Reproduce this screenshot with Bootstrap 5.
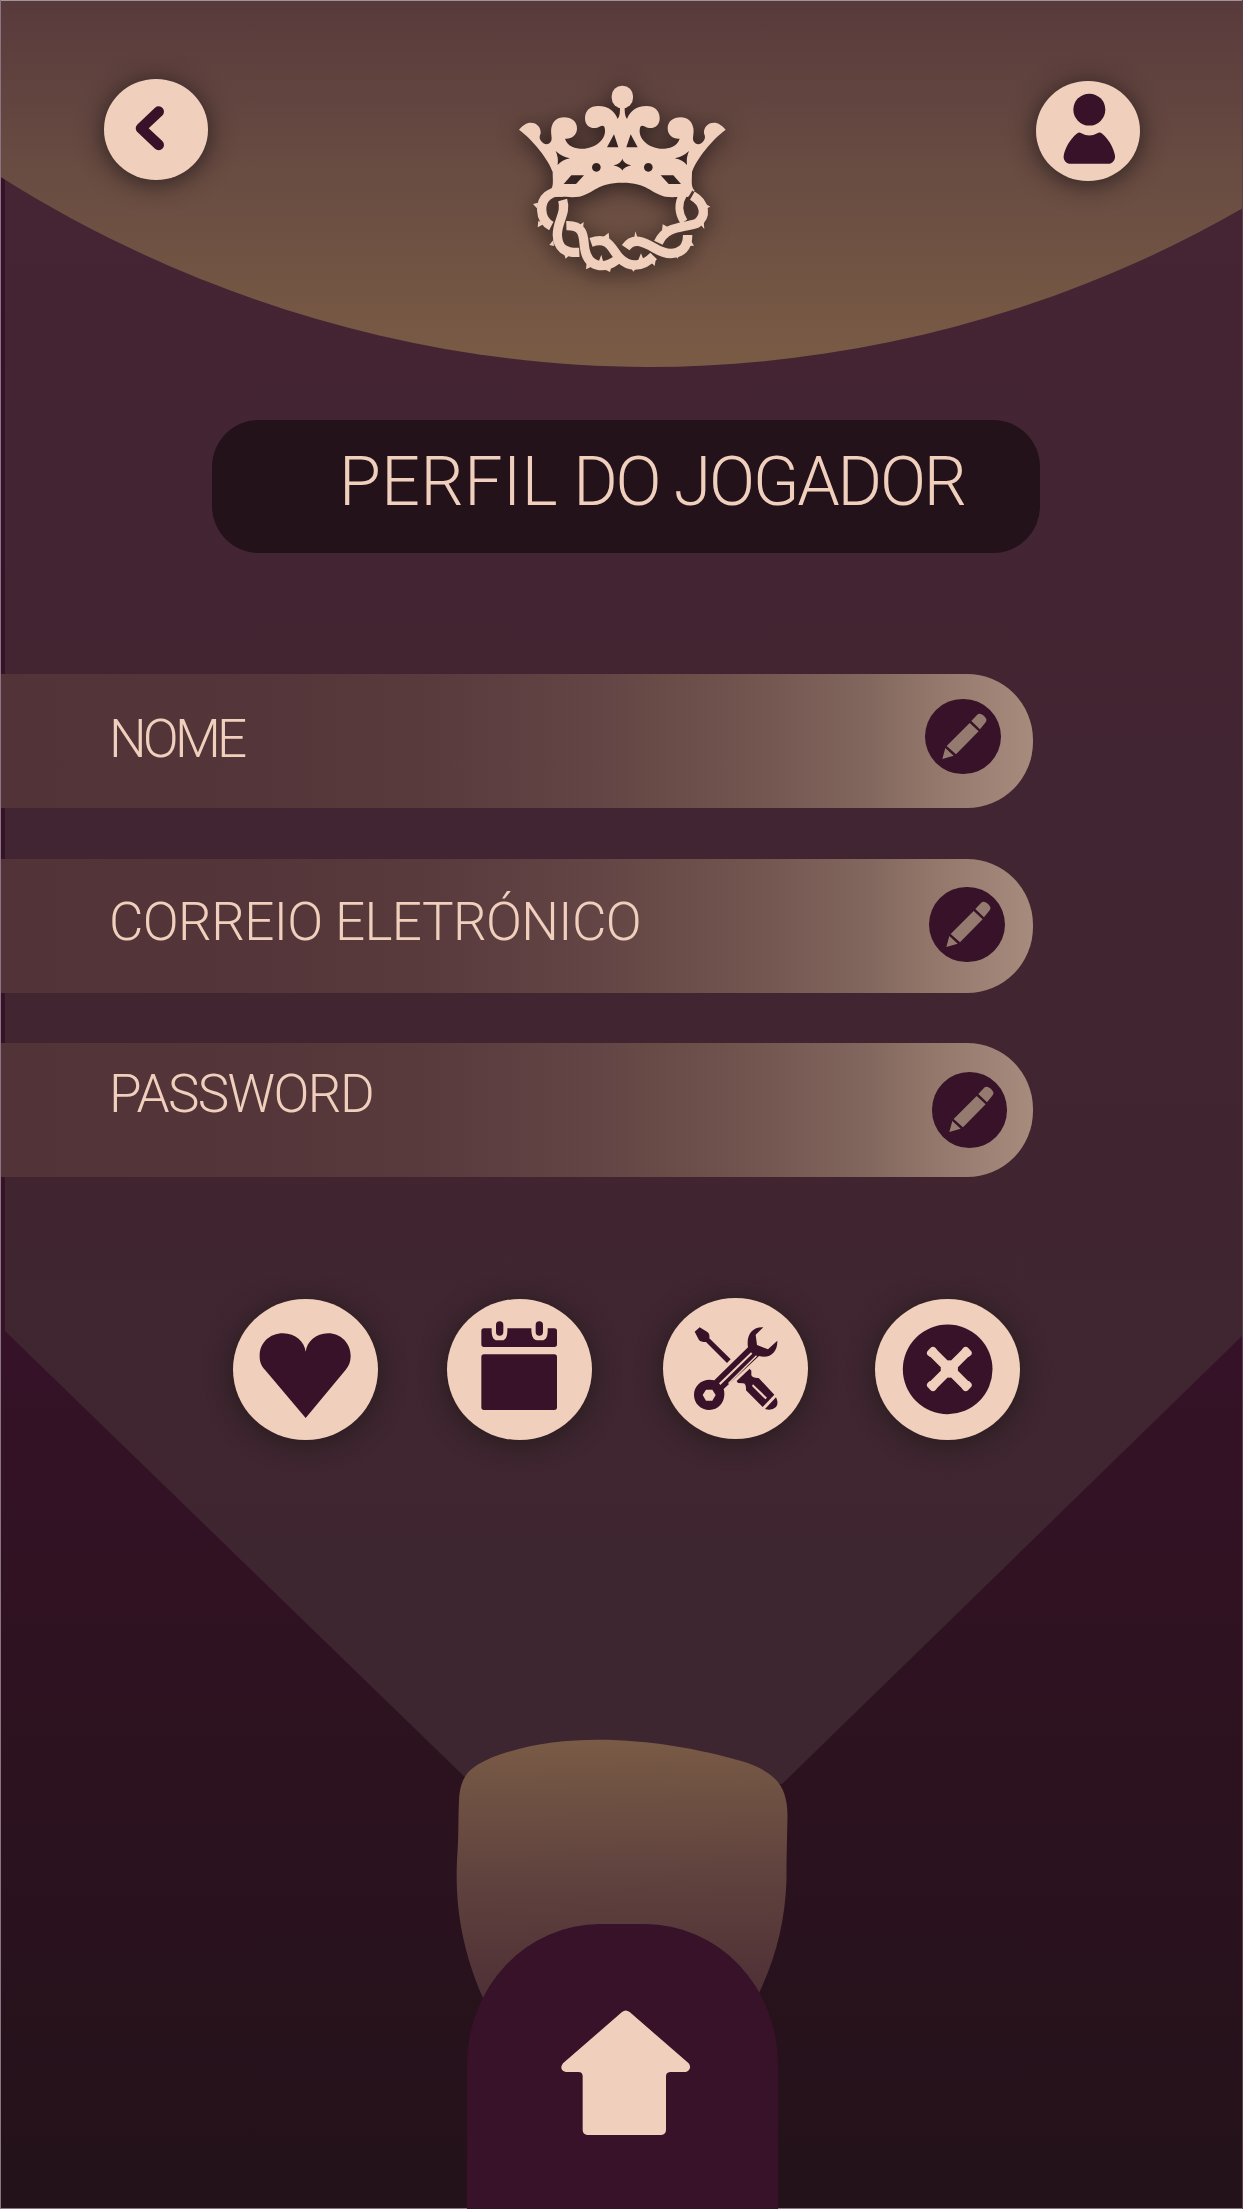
<!DOCTYPE html>
<html lang="pt">
<head>
<meta charset="utf-8">
<meta name="viewport" content="width=device-width, initial-scale=1">
<title>Perfil do jogador</title>
<link href="https://cdn.jsdelivr.net/npm/bootstrap@5.3.0/dist/css/bootstrap.min.css" rel="stylesheet">
<style>
  :root { --cream: #f0cfbc; --plum: #371228; }
  body { background: #23121a; font-family: Roboto, "Liberation Sans", sans-serif; font-weight: 300; color: var(--cream); }
  .screen { width: 1243px; height: 2209px; }
  .backdrop { z-index: 0; }
  .layer { z-index: 1; }
  .topbar { height: 420px; padding: 0 103.5px 0 104px; }
  .round-btn { background: var(--cream); border-radius: 50%; box-shadow: 0 3px 24px 1px rgba(34, 26, 26, .8); }
  .round-btn svg, .edit-btn svg { display: block; width: 100%; height: 100%; }
  .nav-round { width: 104px; height: 100.5px; }
  .nav-back { margin-top: 79px; }
  .nav-profile { margin-top: 80.5px; }
  .crown { width: 245px; height: 220px; margin: 70px 0 0 1px; filter: drop-shadow(0 4px 11px rgba(30, 20, 20, .85)); }
  .title-pill { width: 828px; height: 133px; margin-left: 212px; background: #23121a; border-radius: 47px; padding-left: 127px; }
  .title-pill h1 { font-size: 68px; font-weight: 300; line-height: 124px; letter-spacing: -1.35px; }
  .word-wide { letter-spacing: .5px; }
  .word-tight { letter-spacing: -2.2px; }
  .fields { margin-top: 121px; padding-left: 1px; gap: 51.5px; }
  .field-bar { width: 1032px; height: 133.7px; padding-left: 108px; border-radius: 0 66px 66px 0;
    background: linear-gradient(90deg, #523438 0%, #54363a 25%, #593b3d 42%, #634546 58%, #694b47 64%, #755852 75%, #82675e 84%, #92766a 90%, #9d8174 95%, #a78b7d 100%); }
  .field-label { font-size: 53px; line-height: 60px; }
  .label-name { padding-top: 35px; letter-spacing: -3.8px; }
  .label-mail { padding-top: 33px; letter-spacing: -.6px; }
  .label-pass { padding-top: 21px; letter-spacing: -1.6px; }
  .bar-name { padding-right: 32.5px; }
  .bar-mail { padding-right: 28.5px; }
  .bar-pass { padding-right: 26px; margin-top: -1px; }
  .edit-btn { width: 75.3px; height: 75.3px; border-radius: 50%; background: var(--plum); }
  .bar-name .edit-btn { margin-top: 25px; }
  .bar-mail .edit-btn { margin-top: 27.5px; }
  .bar-pass .edit-btn { margin-top: 29px; }
  .actions { margin-top: 122px; padding-left: 232.5px; }
  .action-btn { width: 145px; height: 141px; }
  .gap-calendar { margin-left: 69.7px; }
  .gap-tools { margin-left: 70.5px; margin-top: -1px; }
  .gap-close { margin-left: 67.8px; }
  .home-tab { width: 311px; height: 285px; margin: 483.5px 0 0 467px; background: var(--plum); border-radius: 133px 133px 0 0 / 140px 140px 0 0; }
  .home-icon { margin: 86.5px 0 0 6px; }
</style>
</head>
<body>
<main class="screen position-relative overflow-hidden">
  <svg class="backdrop position-absolute top-0 start-0" width="1243" height="2209" viewBox="0 0 1243 2209" aria-hidden="true">
    <defs>
      <linearGradient id="night" x1="0" y1="0" x2="0" y2="1"><stop offset="0" stop-color="#351229"/><stop offset=".62" stop-color="#351227"/><stop offset=".8" stop-color="#2c121f"/><stop offset="1" stop-color="#23121a"/></linearGradient>
      <linearGradient id="beam" x1="0" y1="0" x2="0" y2="1"><stop offset="0" stop-color="#462434"/><stop offset="1" stop-color="#3d262f"/></linearGradient>
      <linearGradient id="dome" x1="0" y1="0" x2="0" y2="1"><stop offset="0" stop-color="#583a3c"/><stop offset=".5" stop-color="#6a4d42"/><stop offset="1" stop-color="#7a5b45"/></linearGradient>
      <linearGradient id="lamp" x1="0" y1="0" x2=".02" y2="1"><stop offset="0" stop-color="#7a5b46"/><stop offset=".55" stop-color="#5f423e"/><stop offset="1" stop-color="#4f3036"/></linearGradient>
    </defs>
    <rect width="1243" height="2209" fill="url(#night)"/>
    <path d="M5 0H1243V1335L782 1784H472L5 1331Z" fill="url(#beam)"/>
    <path d="M0 0H1243V208C1060 314 850 367 648 367C420 367 190 297 0 176.5Z" fill="url(#dome)"/>
    <path d="M483 1998C461 1948 455 1903 457 1860C459 1835 458 1820 459 1801C460 1775 470 1767 493 1757C570 1728 668 1740 743 1761.500C778 1773 787 1788 787.500 1815C787 1840 786.500 1855 786.500 1880C785 1920 777 1955 759 1993Z" fill="url(#lamp)"/>
    <path d="M0 .5H1243" stroke="#a59397"/><path d="M.5 0V2209M0 2208.5H1243" stroke="#8d7484"/><path d="M1242.5 0V2209" stroke="#5e3c4c"/>
  </svg>

  <div class="layer position-relative d-flex flex-column">
    <header class="topbar d-flex justify-content-between align-items-start">
      <button class="btn border-0 p-0 round-btn nav-round nav-back" aria-label="Voltar">
        <svg viewBox="72 57 312 302"><path d="M236 155L183 205L236 255" fill="none" stroke="#371228" stroke-width="32" stroke-linecap="round" stroke-linejoin="round"/></svg>
      </button>
      <svg class="crown" viewBox="0 0 735 660" fill="#f0cfbc">
        <defs>
          <path id="half" fill-rule="evenodd" d="M57 179C68 166 79 158 92 158C112 158 123 173 122 190C117 202 119 207 124 214C133 226 147 225 153 214C158 206 151 190 154 174C158 153 172 142 192 142C215 142 231 155 231 175C231 197 213 208 195 206C203 230 226 236 248 236C282 236 325 208 313 170C307 163 300 170 291 173C270 178 254 164 255 143C256 121 271 108 294 108C328 108 346 127 353 147C360 138 360 125 360 110H368V338C290 338 284 369 238 380C210 384 190 378 170 381L150 362C162 350 158 332 158 306C145 268 98 209 57 179ZM342 193L321 232H355ZM289 279a13 13 0 1 0 .1 0ZM167 243Q185 260 210 265Q185 270 173 285Q176 262 167 243ZM214 316H252L228 342H191ZM368 265Q362 283 340 286Q362 291 368 303Z"/>
        </defs>
        <use href="#half"/><use href="#half" transform="matrix(-1 0 0 1 734 0)"/>
        <rect x="335" y="47" width="64" height="68" rx="31"/>
        <g fill="none" stroke="#f0cfbc" stroke-width="28">
          <path d="M190 367C150 360 124 385 125 420C126 442 133 457 154 468"/>
          <path d="M188 390C200 430 171 455 172 495C173 535 195 549 238 547"/>
          <path d="M199 467C260 465 248 510 255 540C265 590 310 600 350 570"/>
          <path d="M273 517C330 497 335 540 360 565C390 595 430 590 461 558"/>
          <path d="M377 533C400 500 430 515 465 535C510 562 563 555 563 495"/>
          <path d="M475 518C500 465 550 475 590 460C620 440 617 400 577 377"/>
          <path d="M550 372C533 400 535 430 552 455" stroke-width="24"/>
        </g>
        <path d="M99 402L114 398 112 416ZM113 472L115 452 132 462ZM148 525L160 510 162 528ZM192 552L209 555 197 566ZM235 468L251 456 249 478ZM258 598L260 575 274 590ZM296 575L304 554 310 577ZM310 501L326 488 328 508ZM316 599L333 594 330 606ZM392 592L409 594 400 605ZM402 508L406 484 413 504ZM414 572L423 550 431 570ZM452 576L468 564 464 588ZM486 482L488 463 505 472ZM526 556L540 552 532 566ZM568 504L582 527 566 528ZM598 460L611 454 613 477ZM613 400L631 410 614 418Z"/>
        <path d="M579 363L568 381" stroke="#503931" stroke-width="5"/>
      </svg>
      <button class="btn border-0 p-0 round-btn nav-round nav-profile" aria-label="Perfil">
        <svg viewBox="77 61 312 302" fill="#371228"><circle cx="237" cy="147" r="48"/><path d="M200 219Q206 213 213 218Q237 232 261 218Q268 213 275 219C298 238 310 265 314 285C316 300 305 310 294 310H181C168 310 158 300 160 285C164 265 178 236 200 219Z"/></svg>
      </button>
    </header>

    <div class="title-pill"><h1 class="m-0 text-nowrap"><span class="word-wide">PERFIL</span> <span class="word-tight">DO JOGADOR</span></h1></div>

    <svg width="0" height="0" class="position-absolute" aria-hidden="true">
      <symbol id="pencil" viewBox="196 137 226 226"><g fill="#957a6f"><path d="M335 203L352 185C358 178 367 182 374 189C381 197 383 201 377 208L361 228Z"/><path d="M330 209L357 234L289 303L261 278ZM257 284L282 307L248 317Z"/></g></symbol>
    </svg>
    <section class="fields d-flex flex-column">
      <div class="field-bar bar-name d-flex justify-content-between align-items-start">
        <div class="field-label label-name">NOME</div>
        <button class="btn border-0 p-0 edit-btn" aria-label="Editar nome"><svg><use href="#pencil"/></svg></button>
      </div>
      <div class="field-bar bar-mail d-flex justify-content-between align-items-start">
        <div class="field-label label-mail">CORREIO ELETRÓNICO</div>
        <button class="btn border-0 p-0 edit-btn" aria-label="Editar correio"><svg><use href="#pencil"/></svg></button>
      </div>
      <div class="field-bar bar-pass d-flex justify-content-between align-items-start">
        <div class="field-label label-pass">PASSWORD</div>
        <button class="btn border-0 p-0 edit-btn" aria-label="Editar password"><svg><use href="#pencil"/></svg></button>
      </div>
    </section>

    <nav class="actions d-flex">
      <button class="btn border-0 p-0 round-btn action-btn" aria-label="Favoritos">
        <svg viewBox="67 57 435 423"><path d="M285 414L164 271C150 255 147 245 147 228C147 188 177 160 217 160C255 160 281 185 285 215C289 185 315 160 352 160C391 160 420 190 420 228C420 245 415 258 404 271Z" fill="#371228"/></svg>
      </button>
      <button class="btn border-0 p-0 round-btn action-btn gap-calendar" aria-label="Calendário">
        <svg viewBox="711 57 435 423" fill="#371228"><rect x="814" y="223" width="227" height="167" rx="8"/><path d="M822 145H845C844 165 848 181 862 181H876C889 181 893 165 892 145H964C964 165 968 181 982 181H996C1010 181 1014 165 1013 145H1033Q1041 145 1041 153V193Q1041 201 1033 201H822Q814 201 814 193V153Q814 145 822 145Z"/><rect x="858" y="124" width="22" height="43" rx="11"/><rect x="977" y="124" width="22" height="43" rx="11"/></svg>
      </button>
      <button class="btn border-0 p-0 round-btn action-btn gap-tools" aria-label="Definições">
        <svg viewBox="67 54 435 423" fill="#371228">
          <path d="M162 155L177 142L200 156Q208 161 206 175L270 238L259 249L196 186Q180 186 175 180Z"/>
          <path fill-rule="evenodd" d="M221 301L322 202C316 165 335 140 368 142L345 164L349 195L382 208L410 182C411 215 389 237 355 228L249 327C258 360 237 390 206 390C180 390 160 370 160 345C160 315 187 293 221 301ZM196 329L186 345L196 362H215L225 345L215 329ZM235 310L239 315L335 221L331 217ZM262 309L265 312L349 229L346 226Z"/>
          <path fill-rule="evenodd" d="M327 266L332 272V286Q337 295 354 294L401 344L366 381L316 331Q317 309 306 310L292 309L288 303ZM337 313L334 318L374 358L379 353ZM406 352Q415 370 406 381Q393 393 373 387Z"/>
        </svg>
      </button>
      <button class="btn border-0 p-0 round-btn action-btn gap-close" aria-label="Fechar">
        <svg viewBox="706 57 435 423"><circle cx="924" cy="268" r="134.500" fill="#371228"/><path d="M879 217L979 317M979 217L879 317" stroke="#f0cfbc" stroke-width="29"/><path d="M874 212L984 322M984 212L874 322" stroke="#f0cfbc" stroke-width="14" stroke-linejoin="round"/><path d="M873 219L880 212M978 212L985 219M985 315L978 322M880 322L873 315M929 252V282M914 267H944" stroke="#f0cfbc" stroke-width="22" stroke-linecap="round"/></svg>
      </button>
    </nav>

    <button class="btn border-0 p-0 home-tab d-flex justify-content-center align-items-start" aria-label="Início">
      <svg class="home-icon" width="130" height="126" viewBox="423 932 390 378"><path d="M606 938Q617 929 629 938L806 1092Q811 1098 810 1106Q806 1117 797 1118H750Q738 1119 738 1131V1293Q737 1306 724 1307H502Q489 1306 488 1293V1131Q488 1118 475 1118H438Q427 1117 424 1107Q424 1098 429 1092Z" fill="#f0cfbc"/></svg>
    </button>
  </div>
</main>
<script src="https://cdn.jsdelivr.net/npm/bootstrap@5.3.0/dist/js/bootstrap.bundle.min.js"></script>
</body>
</html>
